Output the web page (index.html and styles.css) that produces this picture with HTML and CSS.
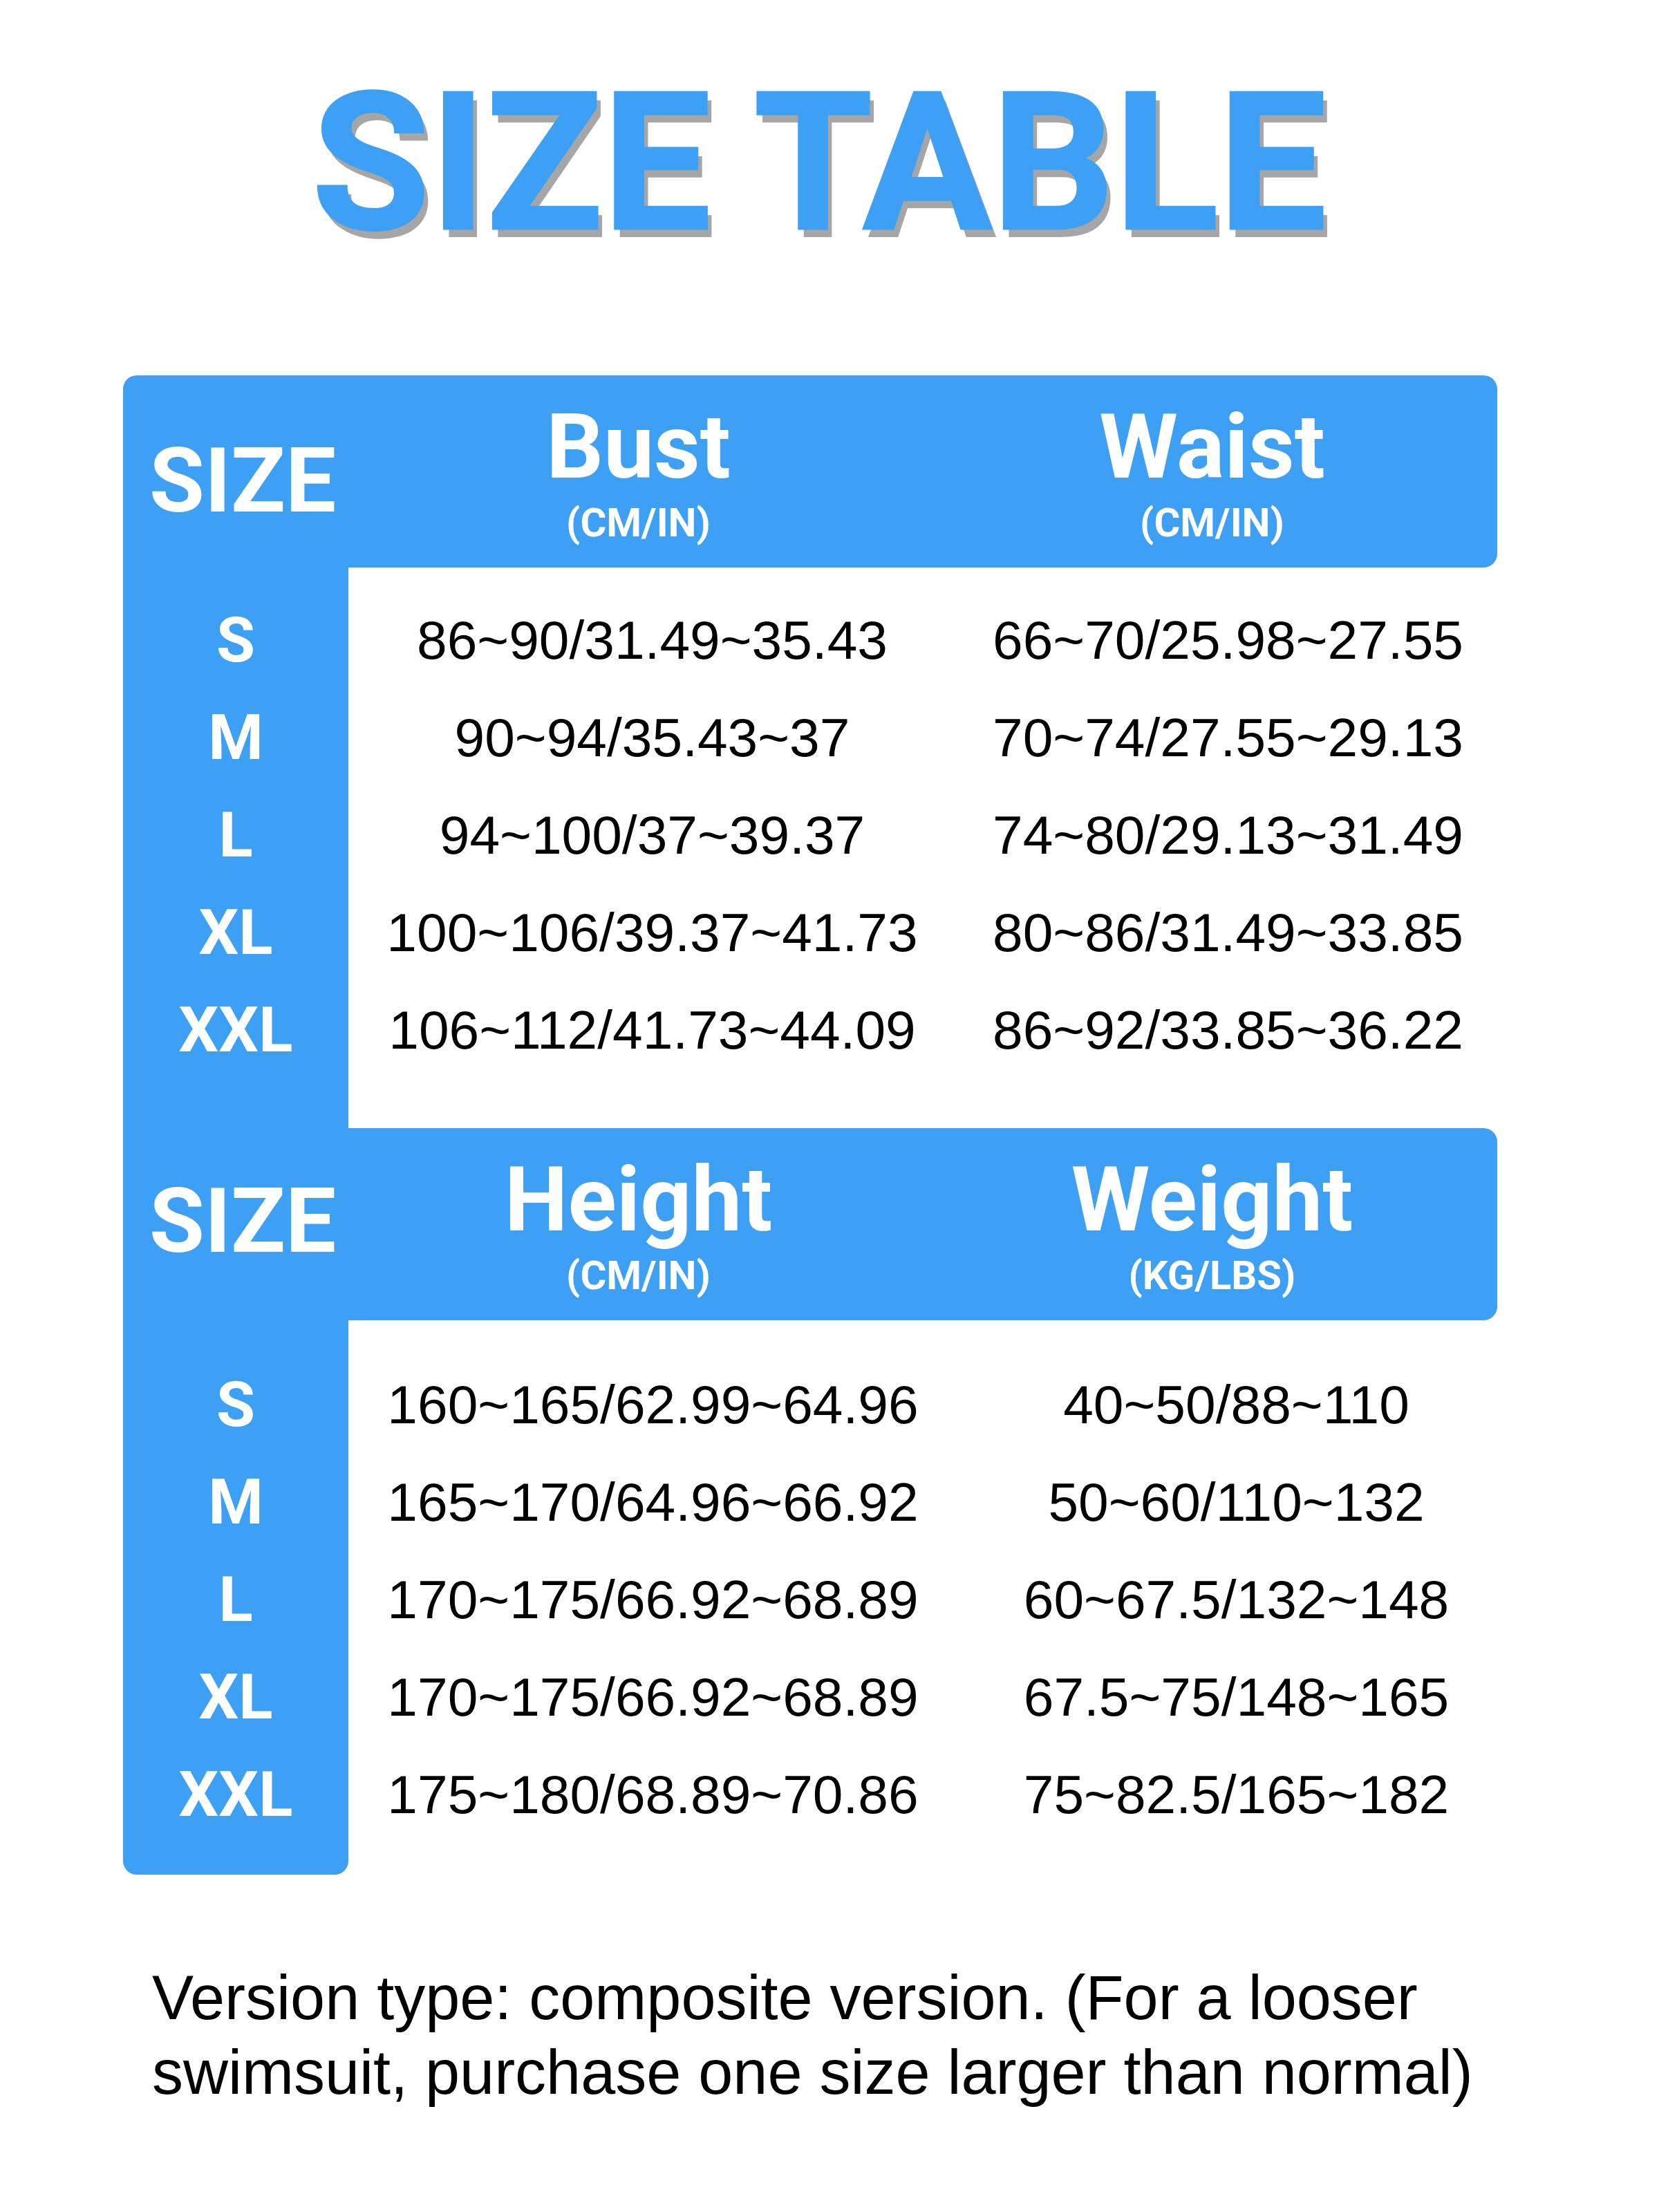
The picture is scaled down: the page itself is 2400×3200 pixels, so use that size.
FILE: index.html
```html
<!DOCTYPE html>
<html lang="en">
<head>
<meta charset="utf-8">
<title>Size Table</title>
<link rel="stylesheet" href="styles.css">
</head>
<body>
<div class="sheet">
  <h1 class="title">SIZE TABLE</h1>

  <div class="table">
    <section class="block block--first">
      <div class="side">
        <div class="side-head">SIZE</div>
        <div class="side-body">
          <div class="size">S</div>
          <div class="size">M</div>
          <div class="size">L</div>
          <div class="size">XL</div>
          <div class="size">XXL</div>
        </div>
      </div>
      <div class="bar">
        <div class="head-col">
          <div class="head-name">Bust</div>
          <div class="head-unit">(CM/IN)</div>
        </div>
        <div class="head-col">
          <div class="head-name">Waist</div>
          <div class="head-unit">(CM/IN)</div>
        </div>
      </div>
      <div class="data">
        <div class="cell cell--a">86~90/31.49~35.43</div>
        <div class="cell cell--b">66~70/25.98~27.55</div>
        <div class="cell cell--a">90~94/35.43~37</div>
        <div class="cell cell--b">70~74/27.55~29.13</div>
        <div class="cell cell--a">94~100/37~39.37</div>
        <div class="cell cell--b">74~80/29.13~31.49</div>
        <div class="cell cell--a">100~106/39.37~41.73</div>
        <div class="cell cell--b">80~86/31.49~33.85</div>
        <div class="cell cell--a">106~112/41.73~44.09</div>
        <div class="cell cell--b">86~92/33.85~36.22</div>
      </div>
    </section>

    <section class="block block--second">
      <div class="side">
        <div class="side-head">SIZE</div>
        <div class="side-body">
          <div class="size">S</div>
          <div class="size">M</div>
          <div class="size">L</div>
          <div class="size">XL</div>
          <div class="size">XXL</div>
        </div>
      </div>
      <div class="bar">
        <div class="head-col">
          <div class="head-name">Height</div>
          <div class="head-unit">(CM/IN)</div>
        </div>
        <div class="head-col">
          <div class="head-name">Weight</div>
          <div class="head-unit">(KG/LBS)</div>
        </div>
      </div>
      <div class="data">
        <div class="cell cell--a">160~165/62.99~64.96</div>
        <div class="cell cell--b">40~50/88~110</div>
        <div class="cell cell--a">165~170/64.96~66.92</div>
        <div class="cell cell--b">50~60/110~132</div>
        <div class="cell cell--a">170~175/66.92~68.89</div>
        <div class="cell cell--b">60~67.5/132~148</div>
        <div class="cell cell--a">170~175/66.92~68.89</div>
        <div class="cell cell--b">67.5~75/148~165</div>
        <div class="cell cell--a">175~180/68.89~70.86</div>
        <div class="cell cell--b">75~82.5/165~182</div>
      </div>
    </section>
  </div>

  <p class="note">Version type: composite version. (For a looser swimsuit, purchase one size larger than normal)</p>
</div>
</body>
</html>
```

FILE: styles.css
```css
html, body {
  margin: 0;
  padding: 0;
  background: #ffffff;
}

.sheet {
  width: 1988px;
  margin-left: 178px;
  padding-top: 97px;
}

.title {
  margin: 0;
  padding-left: 26px;
  font-family: Roboto, "Liberation Sans", sans-serif;
  font-weight: 700;
  font-size: 278px;
  line-height: 278px;
  color: #3ea0f5;
  text-align: center;
  white-space: nowrap;
  -webkit-text-stroke: 3px #3ea0f5;
  text-shadow: 7px 12px 0 #a6a6a6;
}

.table {
  margin-top: 168px;
}

.block {
  display: grid;
  grid-template-columns: 326px 1fr;
}

.side {
  grid-column: 1;
  grid-row: 1 / span 2;
  background: #3ea0f5;
  color: #ffffff;
  font-family: Roboto, "Liberation Sans", sans-serif;
  font-weight: 700;
  display: flex;
  flex-direction: column;
}

.block--first .side {
  border-radius: 20px 0 0 0;
}

.block--second .side {
  border-radius: 0 0 20px 20px;
}

.side-head {
  height: 278px;
  box-sizing: border-box;
  font-size: 130px;
  line-height: 130px;
  text-align: center;
  padding-left: 20px;
}

.block--first .side-head {
  padding-top: 88px;
}

.block--second .side-head {
  padding-top: 70px;
}

.size {
  height: 141px;
  font-size: 91px;
  line-height: 141px;
  text-align: center;
}

.bar {
  grid-column: 2;
  grid-row: 1;
  height: 278px;
  background: #3ea0f5;
  border-radius: 0 20px 20px 0;
  display: grid;
  grid-template-columns: 1fr 1fr;
  color: #ffffff;
  font-family: Roboto, "Liberation Sans", sans-serif;
  font-weight: 700;
}

.head-col {
  padding-top: 39px;
  text-align: center;
}

.head-col + .head-col {
  padding-left: 6px;
}

.head-col:first-child {
  padding-left: 8px;
}

.head-name {
  font-size: 130px;
  line-height: 130px;
}

.head-unit {
  margin-top: 15px;
  font-size: 58px;
  line-height: 58px;
}

.data {
  grid-column: 2;
  grid-row: 2;
  display: grid;
  grid-template-columns: 1fr 1fr;
  grid-auto-rows: 141px;
  font-family: "Liberation Sans", Arial, sans-serif;
  font-size: 78.5px;
  line-height: 141px;
  color: #000000;
}

.block--first .data,
.block--first .side-body {
  padding-top: 35px;
  padding-bottom: 71px;
}

.block--second .data,
.block--second .side-body {
  padding-top: 52px;
  padding-bottom: 45px;
}

.cell {
  text-align: center;
  white-space: nowrap;
}

.block--first .cell--a { padding-left: 48px; }
.block--first .cell--b { padding-left: 52px; }
.block--second .cell--a { padding-left: 50px; }
.block--second .cell--b { padding-left: 76px; }

.note {
  margin: 124px 0 0 42px;
  width: 1960px;
  font-family: "Liberation Sans", Arial, sans-serif;
  font-size: 90px;
  line-height: 108px;
  color: #000000;
}
```
